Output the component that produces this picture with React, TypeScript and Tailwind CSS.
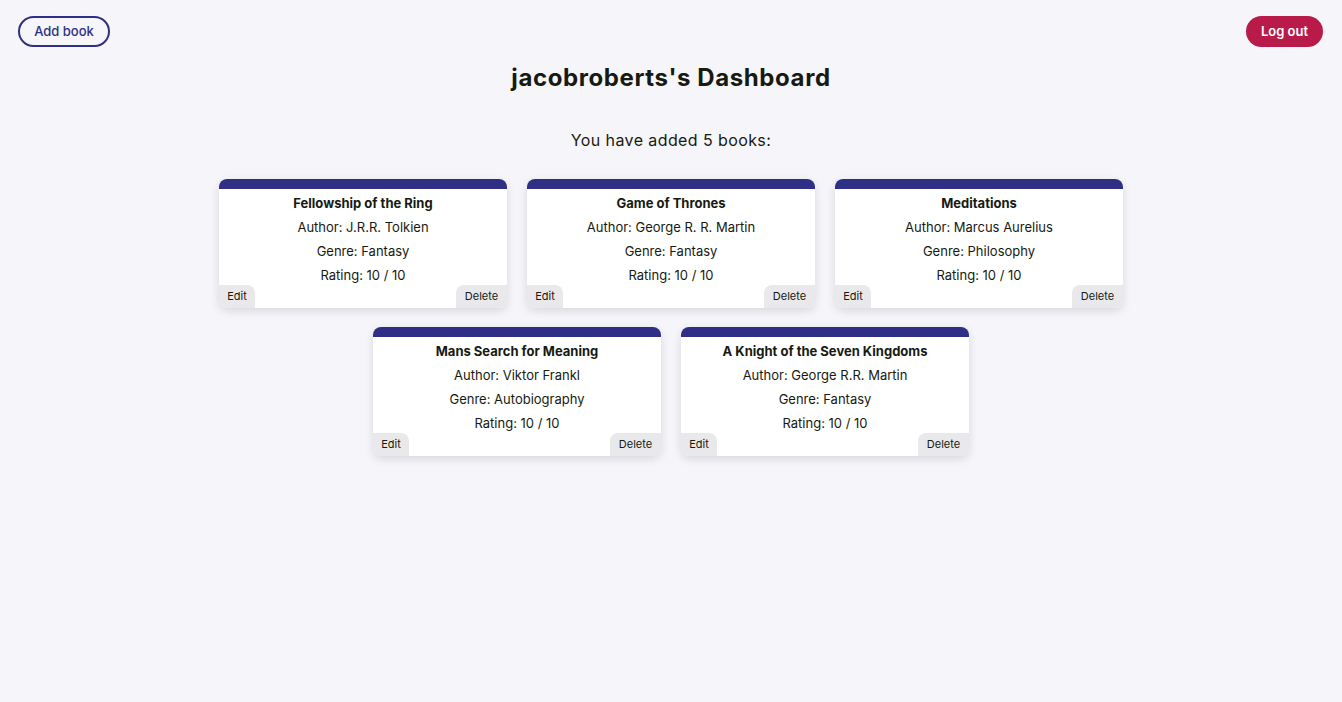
import React from "react";

const books = [
  { title: "Fellowship of the Ring", author: "J.R.R. Tolkien", genre: "Fantasy", rating: 10 },
  { title: "Game of Thrones", author: "George R. R. Martin", genre: "Fantasy", rating: 10 },
  { title: "Meditations", author: "Marcus Aurelius", genre: "Philosophy", rating: 10 },
  { title: "Mans Search for Meaning", author: "Viktor Frankl", genre: "Autobiography", rating: 10 },
  { title: "A Knight of the Seven Kingdoms", author: "George R.R. Martin", genre: "Fantasy", rating: 10 },
];

export default function App() {
  return (
    <div
      className="min-h-[702px] w-full bg-[#f6f5fa] text-[#161a10]"
      style={{ fontFamily: "Inter, 'Noto Sans', sans-serif" }}
    >
      <div className="flex items-start justify-between pl-[18px] pr-[19px] pt-4">
        <button className="h-[31px] w-[92px] rounded-full border-2 border-[#2f2f86] text-[13px] font-medium text-[#2f2f86]">
          Add book
        </button>
        <button className="h-[31px] w-[77px] rounded-full bg-[#b81b4a] text-[13px] font-semibold text-white">
          Log out
        </button>
      </div>
      <h1 className="mt-[15px] text-center text-[24px] font-bold leading-8 tracking-[0.6px]">
        jacobroberts's Dashboard
      </h1>
      <p className="mt-[34px] text-center text-[16px] leading-6 tracking-[0.4px]">You have added 5 books:</p>
      <div className="mx-auto mt-[27px] flex w-[904px] flex-wrap justify-center gap-x-5 gap-y-[19px]">
        {books.map((b) => (
          <div
            key={b.title}
            className="w-[288px] overflow-hidden rounded-lg bg-white shadow-[0_3px_10px_rgba(0,0,0,0.12)]"
          >
            <div className="h-[10px] bg-[#2f2f86]" />
            <div className="pt-[2px] text-center text-[13px]">
              <div className="h-6 leading-6 font-bold">{b.title}</div>
              <div className="h-6 leading-6">Author: {b.author}</div>
              <div className="h-6 leading-6">Genre: {b.genre}</div>
              <div className="h-6 leading-6">Rating: {b.rating} / 10</div>
            </div>
            <div className="-mt-[2px] flex h-[23px] justify-between text-[11px]">
              <button className="w-9 rounded-tr-lg bg-[#e9e9eb] leading-[23px]">Edit</button>
              <button className="w-[51px] rounded-tl-lg bg-[#e9e9eb] leading-[23px]">Delete</button>
            </div>
          </div>
        ))}
      </div>
    </div>
  );
}
